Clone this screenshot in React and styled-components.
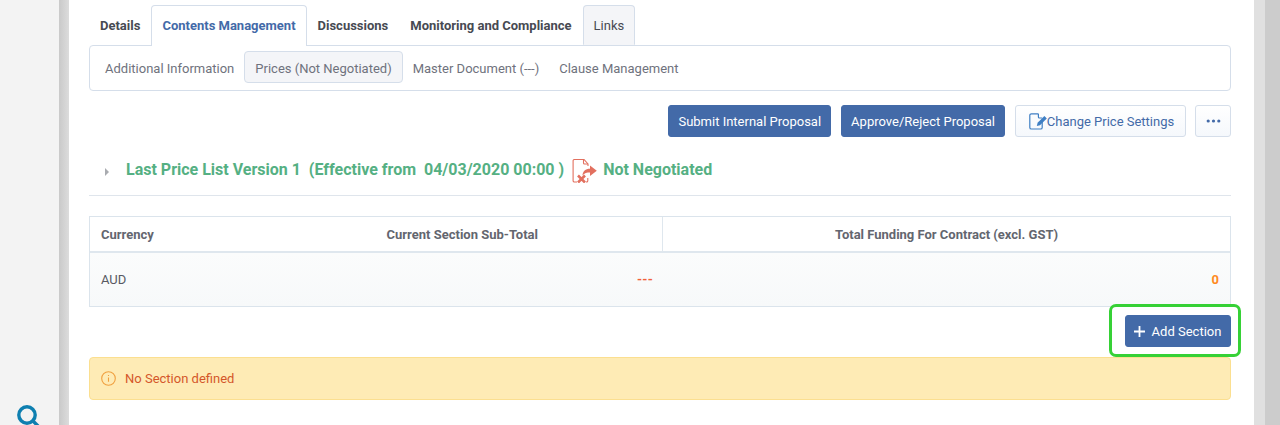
import styled, { createGlobalStyle } from 'styled-components';

const GlobalStyle = createGlobalStyle`
  html, body {
    margin: 0;
    padding: 0;
    background: #fff;
    font-family: Roboto, "Liberation Sans", sans-serif;
    font-size: 13px;
    color: #575962;
  }
`;

const Page = styled.div`
  display: flex;
  width: 1280px;
  height: 425px;
  overflow: hidden;
`;

const Sidebar = styled.aside`
  width: 59px;
  flex: none;
  background: #f3f3f3;
  padding: 404px 0 0 16px;
  box-sizing: border-box;
`;

const Strip = styled.div`
  width: ${(p) => p.$width}px;
  flex: none;
  background: ${(p) => p.$color};
`;

const Main = styled.main`
  width: 1185px;
  flex: none;
  background: #fff;
  box-sizing: border-box;
  padding: 5px 23px 0 20px;
`;

const Tabs = styled.div`
  display: flex;
  height: 40px;
`;

const Tab = styled.div`
  display: flex;
  align-items: center;
  box-sizing: border-box;
  height: ${(p) => (p.$active ? '41px' : '40px')};
  padding: 0 10px ${(p) => (p.$active ? '1px' : '0')};
  font-weight: ${(p) => (p.$plain ? 400 : 700)};
  color: ${(p) => (p.$active ? '#436aa8' : '#474a52')};
  background: ${(p) => (p.$active ? '#fff' : p.$plain ? '#f4f5f8' : 'transparent')};
  border: 1px solid ${(p) => (p.$active || p.$plain ? '#d5deea' : 'transparent')};
  border-bottom: ${(p) => (p.$active ? '0' : '1px solid transparent')};
  border-radius: 4px 4px 0 0;
  position: relative;
  z-index: 1;
`;

const SubNav = styled.nav`
  display: flex;
  align-items: center;
  height: 46px;
  box-sizing: border-box;
  padding: 0 5px 2px;
  border: 1px solid #d5deea;
  border-radius: 4px;
`;

const Pill = styled.div`
  display: flex;
  align-items: center;
  box-sizing: border-box;
  height: 32px;
  padding: 2px 10px 0;
  color: #6f727d;
  border: ${(p) => (p.$active ? '1px solid #d5deea' : '0')};
  background: ${(p) => (p.$active ? '#f4f5f8' : 'transparent')};
  border-radius: 4px;
`;

const Actions = styled.div`
  display: flex;
  justify-content: flex-end;
  gap: 10px;
  margin-top: 14px;
`;

const Button = styled.button`
  display: inline-flex;
  align-items: center;
  justify-content: center;
  box-sizing: border-box;
  height: 32px;
  padding: 0 9px;
  font: 400 13px Roboto, "Liberation Sans", sans-serif;
  color: #fff;
  background: #436aa8;
  border: 1px solid #436aa8;
  border-radius: 3px;
`;

const LightButton = styled(Button)`
  width: ${(p) => p.$width}px;
  margin-left: ${(p) => p.$shift || 0}px;
  padding: 0 0 0 ${(p) => p.$inset || 0}px;
  color: #436aa8;
  background: linear-gradient(#ffffff, #f5f8fc);
  border-color: #d5deea;
`;

const TitleRow = styled.div`
  display: flex;
  align-items: center;
  height: 59px;
  box-sizing: border-box;
  padding: 7px 0 0 16px;
  border-bottom: 1px solid #dfe5ec;
  font-size: 16px;
  font-weight: 700;
  color: #55b083;
  white-space: pre;
`;

const Caret = styled.span`
  width: 0;
  height: 0;
  margin: 4px 17px 0 0;
  border-left: 4px solid #a9abb0;
  border-top: 4px solid transparent;
  border-bottom: 4px solid transparent;
`;

const NotIcon = styled.svg`
  margin: 3px 6px 0 8px;
  flex: none;
`;

const SummaryTable = styled.div`
  margin-top: 20px;
  border: 1px solid #dbe4ec;
  background: #fff;
`;

const SummaryRow = styled.div`
  display: grid;
  grid-template-columns: 573px 1fr;
  height: ${(p) => p.$height}px;
  align-items: center;
  background: ${(p) => p.$bg || 'transparent'};
  border-bottom: ${(p) => (p.$head ? '2px solid #dfe7ee' : '0')};
  box-sizing: border-box;
`;

const LeftCell = styled.div`
  display: flex;
  justify-content: space-between;
  align-items: center;
  height: 100%;
  padding: 0 11px;
  box-sizing: border-box;
  border-right: ${(p) => (p.$rule ? '1px solid #dfe7ee' : '0')};
`;

const HeadText = styled.span`
  font-size: 13px;
  font-weight: 700;
  color: #63666f;
  margin-right: ${(p) => p.$right || 0}px;
`;

const RightCell = styled.div`
  display: flex;
  align-items: center;
  justify-content: ${(p) => (p.$center ? 'center' : 'flex-end')};
  height: 100%;
  padding: 0 11px;
`;

const Amount = styled.span`
  color: ${(p) => p.$color};
  font-weight: ${(p) => p.$weight || 400};
  letter-spacing: ${(p) => p.$spacing || 0}px;
  margin-right: ${(p) => p.$right || 0}px;
`;

const AddRow = styled.div`
  display: flex;
  justify-content: flex-end;
  margin-top: 8px;
`;

const Highlight = styled.div`
  position: relative;
  &::after {
    content: '';
    position: absolute;
    inset: -11px -10px -10px -16px;
    border: 3px solid #36d136;
    border-radius: 7px;
    pointer-events: none;
  }
`;

const AddButton = styled(Button)`
  gap: 7px;
  width: 106px;
  padding: 0 1px 0 0;
`;

const Alert = styled.div`
  display: flex;
  align-items: center;
  gap: 9px;
  height: 43px;
  box-sizing: border-box;
  margin-top: 10px;
  padding-left: 11px;
  background: #feebb5;
  border: 1px solid #fbdf90;
  border-radius: 4px;
  color: #d4572a;
`;

const SearchIcon = () => (
  <svg width="28" height="28" viewBox="0 0 28 28" fill="none" stroke="#0e7fb0" strokeWidth="3.4">
    <circle cx="11" cy="11" r="8.2" />
    <path d="M17 17 L26 26" strokeLinecap="round" />
  </svg>
);

const EditIcon = () => (
  <svg width="18" height="17" viewBox="0 0 18 17" fill="none" stroke="#3f7fc4" strokeWidth="1.2">
    <path d="M9.6.8H2.4A1.6 1.6 0 0 0 .8 2.4v12A1.6 1.6 0 0 0 2.4 16h9.2a1.6 1.6 0 0 0 1.6-1.6V9" />
    <path d="M9.4 1v3a1 1 0 0 0 1 1h2.8" />
    <path d="M7.8 13l.8-3.3 6.8-6.7 2.4 2.4-6.800 6.800z" fill="#3f7fc4" stroke="none" />
  </svg>
);

const NotNegotiatedIcon = () => (
  <NotIcon width="25" height="24" viewBox="0 0 25 24" fill="none">
    <path d="M5 23H2.4a1.3 1.3 0 0 1-1.3-1.3V1.800A1.300 1.300 0 0 1 2.400.5H12l4 4.500v2" stroke="#e2705f" strokeWidth="1.100" />
    <path d="M11.500.8V4a1 1 0 0 0 1 1H16" stroke="#e2705f" strokeWidth="1.100" />
    <path d="M15.800 19v2.700a1.300 1.300 0 0 1-1.300 1.300H14" stroke="#e2705f" strokeWidth="1.100" />
    <path d="M10.500 16.500c.2-4.200 3-6.700 7.500-6.700V6.500l6.800 5.200-6.800 5.300v-3.500c-3.200 0-5.500.5-7.500 3z" fill="#e2705f" />
    <path d="M6 16.500l7 7M13 16.500l-7 7" stroke="#e2705f" strokeWidth="2.600" />
  </NotIcon>
);

const InfoIcon = () => (
  <svg width="15" height="15" viewBox="0 0 15 15" fill="none" stroke="#f0a040" strokeWidth="1.100">
    <circle cx="7.500" cy="7.500" r="6.800" />
    <path d="M7.500 6.500v4.200M7.500 4v1.100" />
  </svg>
);

const PlusIcon = () => (
  <svg width="11" height="11" viewBox="0 0 11 11" stroke="#fff" strokeWidth="1.800">
    <path d="M5.500 0v11M0 5.500h11" />
  </svg>
);

const DotsIcon = () => (
  <svg width="15" height="4" viewBox="0 0 15 4" fill="#436aa8">
    <circle cx="2.200" cy="2" r="1.600" />
    <circle cx="7.500" cy="2" r="1.600" />
    <circle cx="12.800" cy="2" r="1.600" />
  </svg>
);

const App = () => {
  return (
    <>
      <GlobalStyle />
      <Page>
        <Sidebar>
          <SearchIcon />
        </Sidebar>
        <Strip $width={10} $color="linear-gradient(90deg, #c9c9c9, #dcdcdc)" />
        <Main>
          <Tabs>
            <Tab>Details</Tab>
            <Tab $active>Contents Management</Tab>
            <Tab>Discussions</Tab>
            <Tab>Monitoring and Compliance</Tab>
            <Tab $plain>Links</Tab>
          </Tabs>
          <SubNav>
            <Pill>Additional Information</Pill>
            <Pill $active>Prices (Not Negotiated)</Pill>
            <Pill>Master Document (---)</Pill>
            <Pill>Clause Management</Pill>
          </SubNav>
          <Actions>
            <Button>Submit Internal Proposal</Button>
            <Button>Approve/Reject Proposal</Button>
            <LightButton $width={171} $inset={2}>
              <EditIcon />
              Change Price Settings
            </LightButton>
            <LightButton $width={36} $shift={-1}>
              <DotsIcon />
            </LightButton>
          </Actions>
          <TitleRow>
            <Caret />
            {'Last Price List Version 1  (Effective from  04/03/2020 00:00 )'}
            <NotNegotiatedIcon />
            Not Negotiated
          </TitleRow>
          <SummaryTable>
            <SummaryRow $height={36} $head>
              <LeftCell $rule>
                <HeadText>Currency</HeadText>
                <HeadText $right={113}>Current Section Sub-Total</HeadText>
              </LeftCell>
              <RightCell $center>
                <HeadText>Total Funding For Contract (excl. GST)</HeadText>
              </RightCell>
            </SummaryRow>
            <SummaryRow $height={53} $bg="linear-gradient(#fbfcfc, #f7f9fa)">
              <LeftCell>
                <span>AUD</span>
                <Amount $color="#f2603a" $weight={700} $spacing={0.2} $right={-1}>---</Amount>
              </LeftCell>
              <RightCell>
                <Amount $color="#ff8a1e" $weight={700}>0</Amount>
              </RightCell>
            </SummaryRow>
          </SummaryTable>
          <AddRow>
            <Highlight>
              <AddButton>
                <PlusIcon />
                Add Section
              </AddButton>
            </Highlight>
          </AddRow>
          <Alert>
            <InfoIcon />
            No Section defined
          </Alert>
        </Main>
        <Strip $width={11} $color="#e0e0e0" />
        <Strip $width={15} $color="#cccccc" />
      </Page>
    </>
  );
};

export default App;
